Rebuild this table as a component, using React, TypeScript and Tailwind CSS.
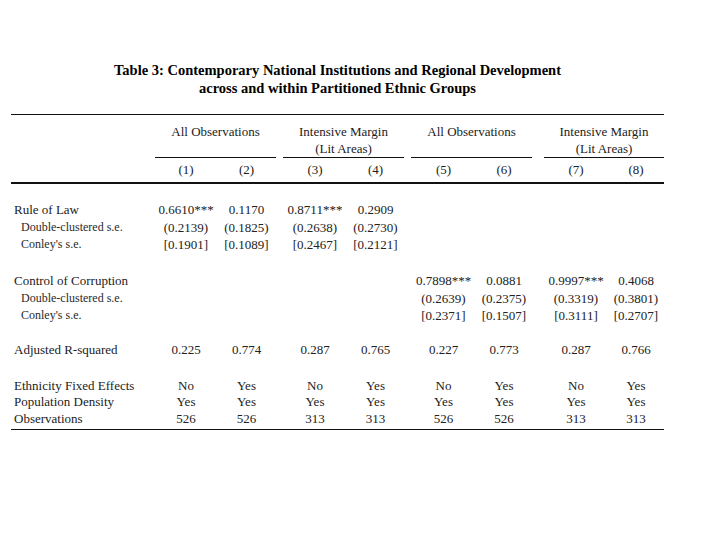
import React from "react";

const cellW = [
  "w-[62px]",
  "w-[59px]",
  "w-[64px]",
  "w-[57px]",
  "w-[65px]",
  "w-[56px]",
  "w-[64px]",
  "w-[56px]",
];
const groupCls = [
  "w-[121px]",
  "ml-[7px] w-[121px]",
  "ml-[7px] w-[121px]",
  "ml-[12px] w-[120px]",
];

type RowProps = {
  label?: string;
  sub?: boolean;
  values?: string[];
  cls: string;
};

function Row({ label = "", sub = false, values = [], cls }: RowProps) {
  return (
    <div className={`flex leading-[17px] ${cls}`}>
      <div
        className={
          sub
            ? "w-[144px] pl-[10px] text-[12px] text-[#2a2a2a]"
            : "w-[144px] pl-[3px] text-[13px]"
        }
      >
        {label}
      </div>
      {groupCls.map((g, gi) => (
        <div key={gi} className={`flex ${g}`}>
          {[0, 1].map((k) => {
            const i = gi * 2 + k;
            return (
              <div key={k} className={`${cellW[i]} text-center text-[13px] whitespace-nowrap`}>
                {values[i] ?? ""}
              </div>
            );
          })}
        </div>
      ))}
    </div>
  );
}

const e = ["", "", "", "", "", "", "", ""];

export default function App() {
  return (
    <div className="w-[720px] h-[540px] bg-white text-[#222] font-['Liberation_Serif','Times_New_Roman',serif] overflow-hidden">
      <div className="ml-[11px] w-[653px] pt-[61px] text-center font-bold text-[14.5px] leading-[18px] text-black">
        <div>Table 3: Contemporary National Institutions and Regional Development</div>
        <div>across and within Partitioned Ethnic Groups</div>
      </div>

      <div className="ml-[11px] w-[653px] mt-[17px] border-t border-[#111]">
        {/* group headers */}
        <div className="flex text-[13px] leading-[17px]">
          <div className="w-[144px]" />
          <div className="w-[121px] pt-[8px] h-[43px] border-b border-[#111] text-center">
            All Observations
          </div>
          <div className="ml-[7px] w-[121px] pt-[8px] h-[43px] border-b border-[#111] text-center">
            <div>Intensive Margin</div>
            <div>(Lit Areas)</div>
          </div>
          <div className="ml-[7px] w-[121px] pt-[8px] h-[43px] border-b border-[#111] text-center">
            All Observations
          </div>
          <div className="ml-[12px] w-[120px] pt-[8px] h-[43px] border-b border-[#111] text-center">
            <div>Intensive Margin</div>
            <div>(Lit Areas)</div>
          </div>
        </div>
        <div className="border-b-2 border-[#111]">
          <Row
            cls="pt-[3px] pb-[4px]"
            values={["(1)", "(2)", "(3)", "(4)", "(5)", "(6)", "(7)", "(8)"]}
          />
        </div>

        <div className="flex flex-col">
          <Row
            cls="mt-[17px] h-[17px]"
            label="Rule of Law"
            values={["0.6610***", "0.1170", "0.8711***", "0.2909", "", "", "", ""]}
          />
          <Row
            cls="mt-[1px] h-[17px]"
            sub
            label="Double-clustered s.e."
            values={["(0.2139)", "(0.1825)", "(0.2638)", "(0.2730)", "", "", "", ""]}
          />
          <Row
            cls="h-[17px]"
            sub
            label="Conley's s.e."
            values={["[0.1901]", "[0.1089]", "[0.2467]", "[0.2121]", "", "", "", ""]}
          />

          <Row
            cls="mt-[19px] h-[17px]"
            label="Control of Corruption"
            values={["", "", "", "", "0.7898***", "0.0881", "0.9997***", "0.4068"]}
          />
          <Row
            cls="mt-[1px] h-[17px]"
            sub
            label="Double-clustered s.e."
            values={["", "", "", "", "(0.2639)", "(0.2375)", "(0.3319)", "(0.3801)"]}
          />
          <Row
            cls="h-[17px]"
            sub
            label="Conley's s.e."
            values={["", "", "", "", "[0.2371]", "[0.1507]", "[0.3111]", "[0.2707]"]}
          />

          <Row
            cls="mt-[17px] h-[17px]"
            label="Adjusted R-squared"
            values={["0.225", "0.774", "0.287", "0.765", "0.227", "0.773", "0.287", "0.766"]}
          />

          <Row
            cls="mt-[19px] h-[16px]"
            label="Ethnicity Fixed Effects"
            values={["No", "Yes", "No", "Yes", "No", "Yes", "No", "Yes"]}
          />
          <Row
            cls="h-[17px]"
            label="Population Density"
            values={["Yes", "Yes", "Yes", "Yes", "Yes", "Yes", "Yes", "Yes"]}
          />
          <Row
            cls="h-[17px]"
            label="Observations"
            values={["526", "526", "313", "313", "526", "526", "313", "313"]}
          />
          <div className="mt-[2px] border-b border-[#111]" />
        </div>
        <div className="hidden">{e.join("")}</div>
      </div>
    </div>
  );
}
